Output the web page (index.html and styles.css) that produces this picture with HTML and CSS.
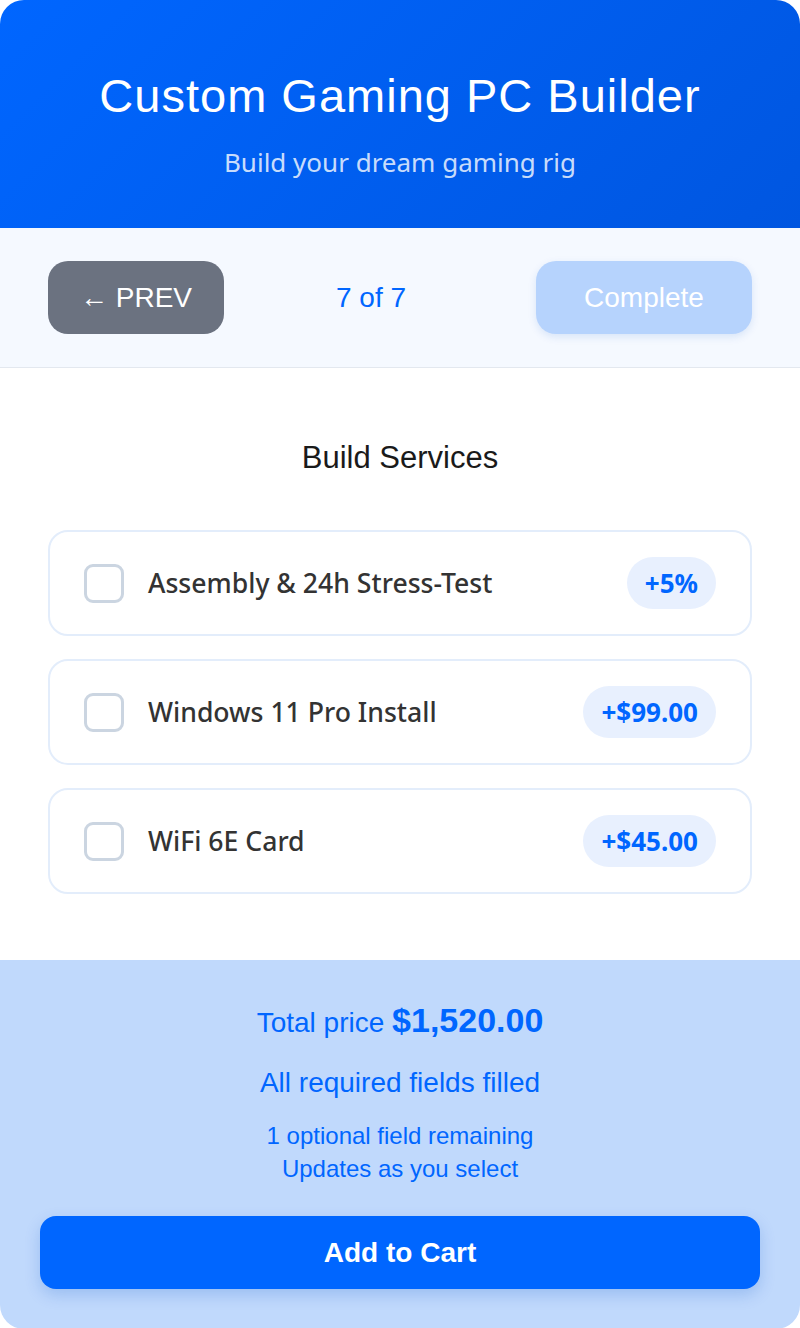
FILE: index.html
```html
<!DOCTYPE html>
<html lang="en">
<head>
    <meta charset="UTF-8">
    <meta name="viewport" content="width=device-width, initial-scale=1.0">
    <title>Custom Gaming PC Builder</title>
    <link rel="stylesheet" href="styles.css">
</head>
<body>
    <div class="builder">
        <header class="header">
            <h1>Custom Gaming PC Builder</h1>
            <p class="subtitle">Build your dream gaming rig</p>
        </header>

        <nav class="step-nav">
            <button type="button" class="btn-prev">&larr; PREV</button>
            <span class="step-count">7 of 7</span>
            <button type="button" class="btn-next" disabled>Complete</button>
        </nav>

        <section class="step">
            <h3>Build Services</h3>
            <div class="options">
                <label class="option">
                    <span class="check"></span>
                    <span class="option-name">Assembly &amp; 24h Stress-Test</span>
                    <span class="badge">+5%</span>
                </label>
                <label class="option">
                    <span class="check"></span>
                    <span class="option-name">Windows 11 Pro Install</span>
                    <span class="badge">+$99.00</span>
                </label>
                <label class="option">
                    <span class="check"></span>
                    <span class="option-name">WiFi 6E Card</span>
                    <span class="badge">+$45.00</span>
                </label>
            </div>
        </section>

        <footer class="summary">
            <div class="total">Total price <strong>$1,520.00</strong></div>
            <div class="status">All required fields filled</div>
            <div class="note">1 optional field remaining<br>Updates as you select</div>
            <button type="button" class="btn-cart">Add to Cart</button>
        </footer>
    </div>
</body>
</html>
```

FILE: styles.css
```css
* {
    box-sizing: border-box;
}
body {
    margin: 0;
    background: #fff;
    font-family: "Liberation Sans", Arial, sans-serif;
}
.builder {
    width: 800px;
    min-height: 1328px;
    border-radius: 24px;
    overflow: hidden;
    background: #fff;
    display: flex;
    flex-direction: column;
}
.header {
    background: linear-gradient(135deg, #0066ff, #0056e0);
    color: #fff;
    text-align: center;
    padding: 69px 20px 46px;
}
.header h1 {
    margin: 0;
    font-size: 47px;
    line-height: 54px;
    font-weight: normal;
    letter-spacing: 1px;
}
.subtitle {
    margin: 20px 0 0;
    font-family: "Noto Sans", "Open Sans", sans-serif;
    font-size: 26px;
    line-height: 39px;
    color: rgba(255, 255, 255, 0.8);
}
.step-nav {
    display: flex;
    align-items: center;
    justify-content: space-between;
    padding: 33px 48px 33px;
    background: #f5f9ff;
    border-bottom: 1px solid #e3e8ef;
}
.step-nav button {
    height: 73px;
    border: none;
    border-radius: 20px;
    font-family: "Liberation Sans", Arial, sans-serif;
    font-size: 28px;
    color: #fff;
}
.btn-prev {
    width: 176px;
    background: #6b7280;
}
.btn-next {
    width: 216px;
    background: #b6d3fd;
    box-shadow: 0 3px 8px rgba(0, 80, 200, 0.12);
}
.step-count {
    font-size: 28px;
    color: #0066ff;
    margin-left: -18px;
}
.step {
    padding: 72px 48px 66px;
}
.step h3 {
    margin: 0 0 54px;
    text-align: center;
    font-size: 31px;
    line-height: 36px;
    font-weight: normal;
    color: #1a1a1a;
}
.options {
    display: flex;
    flex-direction: column;
    gap: 23px;
}
.option {
    display: flex;
    align-items: center;
    height: 106px;
    padding: 0 34px;
    border: 2px solid #e3edfb;
    border-radius: 20px;
}
.check {
    width: 40px;
    height: 39px;
    border: 3px solid #cbd5e1;
    border-radius: 9px;
    flex-shrink: 0;
}
.option-name {
    flex: 1;
    margin-left: 24px;
    font-family: "Noto Sans", "Open Sans", sans-serif;
    font-size: 26.6px;
    font-weight: 500;
    color: #333;
}
.badge {
    height: 52px;
    line-height: 52px;
    padding: 0 18px;
    border-radius: 26px;
    background: #e8f0fe;
    color: #0066ff;
    font-family: "Noto Sans", "Open Sans", sans-serif;
    font-size: 26px;
    font-weight: bold;
}
.summary {
    flex: 1;
    background: #c0d9fc;
    padding: 40px 40px 40px;
    text-align: center;
    color: #0066ff;
}
.total {
    font-size: 28px;
    line-height: 40px;
}
.total strong {
    font-size: 34px;
}
.status {
    margin-top: 24px;
    font-size: 28px;
    line-height: 32px;
}
.note {
    margin-top: 20px;
    font-size: 24px;
    line-height: 33px;
}
.btn-cart {
    display: block;
    width: 100%;
    height: 73px;
    margin-top: 31px;
    border: none;
    border-radius: 16px;
    background: #0066ff;
    color: #fff;
    font-family: "Liberation Sans", Arial, sans-serif;
    font-size: 28px;
    font-weight: bold;
    box-shadow: 0 6px 16px rgba(0, 80, 200, 0.2);
}
```
